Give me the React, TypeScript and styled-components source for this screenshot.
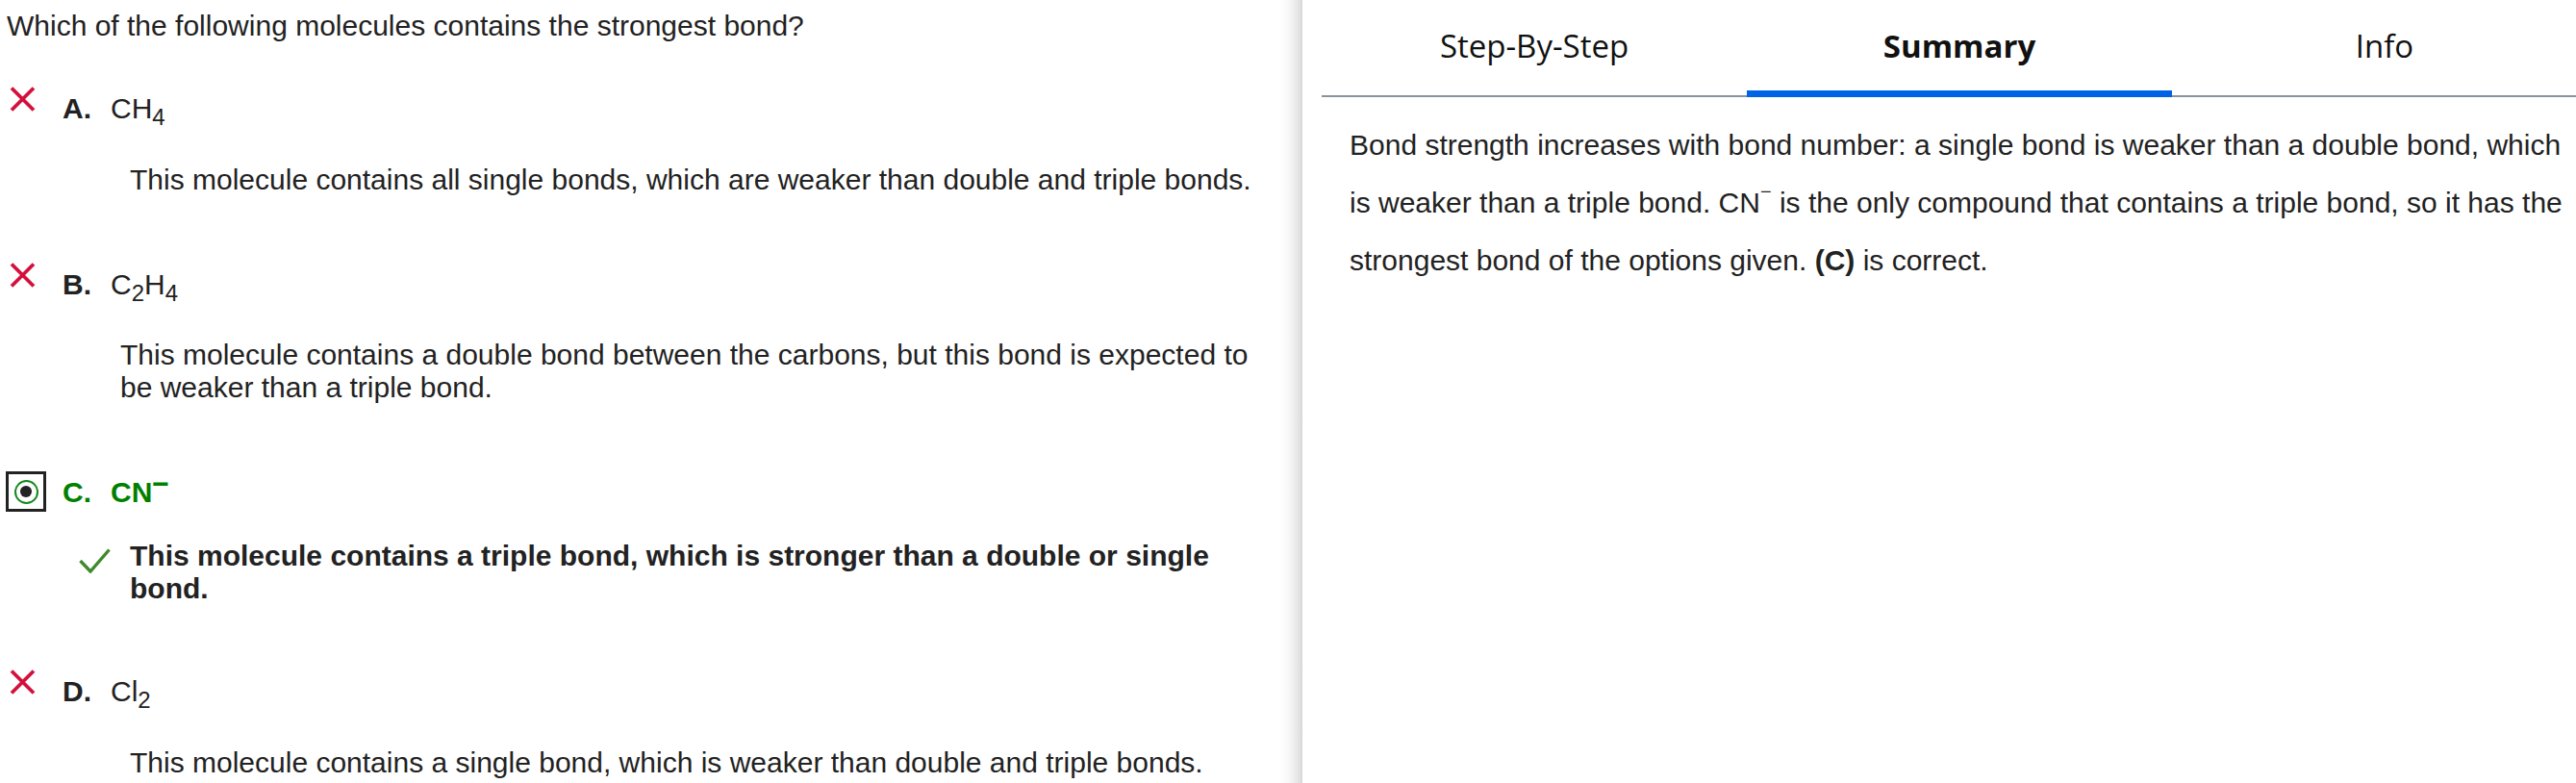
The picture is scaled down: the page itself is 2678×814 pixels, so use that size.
import React from "react";
import styled, { createGlobalStyle } from "styled-components";

const GlobalStyle = createGlobalStyle`
  html, body { margin: 0; padding: 0; background: #fff; }
  body { font-family: "Liberation Sans", Arial, sans-serif; color: #222; }
  * { box-sizing: border-box; }
`;

const Page = styled.div`
  display: flex;
  width: 2678px;
  height: 814px;
  overflow: hidden;
  background: #fff;
`;

const QuestionPane = styled.section`
  flex: 0 0 1330px;
  padding: 10px 20px 0 7px;
  font-family: "Liberation Sans", Arial, sans-serif;
  font-size: 30px;
  line-height: 34px;
  color: #222;
`;

const Question = styled.p`
  margin: 0;
`;

const Option = styled.div<{ $gap: number }>`
  margin-top: ${(p) => p.$gap}px;
`;

const OptionHead = styled.div`
  display: flex;
  align-items: flex-start;
`;

const MarkerSlot = styled.div`
  flex: 0 0 58px;
  display: flex;
`;

const WrongMark = styled.svg`
  margin-left: 3px;
  width: 27px;
  height: 26px;
`;

const RadioBox = styled.div`
  margin-left: -1px;
  width: 42px;
  height: 42px;
  border: 3px solid #222;
  display: flex;
  align-items: center;
  justify-content: center;
`;

const RadioRing = styled.div`
  width: 25px;
  height: 25px;
  border-radius: 50%;
  border: 2.5px solid #12891a;
  display: flex;
  align-items: center;
  justify-content: center;
`;

const RadioDot = styled.div`
  width: 12px;
  height: 12px;
  border-radius: 50%;
  background: #222;
`;

const Label = styled.div<{ $offset: number; $correct?: boolean }>`
  margin-top: ${(p) => p.$offset}px;
  color: ${(p) => (p.$correct ? "#008000" : "#222")};
  font-weight: ${(p) => (p.$correct ? 700 : 400)};
  white-space: nowrap;
`;

const Letter = styled.span`
  font-weight: 700;
  margin-right: 20px;
`;

const Sub = styled.sub`
  font-size: 24px;
  line-height: 0;
  vertical-align: -7px;
`;

const Charge = styled.sup<{ $size: number; $lift: number }>`
  font-size: ${(p) => p.$size}px;
  line-height: 0;
  vertical-align: ${(p) => p.$lift}px;
`;

const Explanation = styled.div<{ $gap: number; $indent: number; $strong?: boolean }>`
  margin-top: ${(p) => p.$gap}px;
  padding-left: ${(p) => p.$indent}px;
  display: flex;
  align-items: flex-start;
  font-weight: ${(p) => (p.$strong ? 700 : 400)};
`;

const CheckMark = styled.svg`
  flex: 0 0 33px;
  width: 33px;
  height: 26px;
  margin-top: 9px;
  margin-right: 20px;
`;

const Gutter = styled.div`
  flex: 0 0 24px;
  background: linear-gradient(to right, #ffffff 0%, #f6f6f6 45%, #e6e6e6 80%, #d8d8d8 100%);
`;

const SolutionPane = styled.section`
  flex: 1 1 auto;
  min-width: 0;
  overflow: hidden;
  padding-left: 20px;
`;

const TabBar = styled.div`
  display: flex;
  width: 1326px;
  border-bottom: 2px solid #88939b;
`;

const Tab = styled.div<{ $active?: boolean }>`
  position: relative;
  flex: 0 0 442px;
  height: 99px;
  padding-top: 26px;
  text-align: center;
  font-family: "Open Sans", "Noto Sans", sans-serif;
  font-size: 33px;
  line-height: 44px;
  color: #111;
  font-weight: ${(p) => (p.$active ? 700 : 400)};
  &::after {
    content: "";
    display: ${(p) => (p.$active ? "block" : "none")};
    position: absolute;
    left: 0;
    right: 0;
    bottom: -2px;
    height: 7px;
    background: #0063e5;
  }
`;

const Summary = styled.p`
  margin: 0;
  padding: 20px 8px 0 29px;
  font-family: "Liberation Sans", Arial, sans-serif;
  font-size: 30px;
  line-height: 60px;
  color: #222;
`;

const Wrong = () => (
  <WrongMark viewBox="0 0 27 26">
    <path d="M2 1.5 L25 24.5 M25 1.5 L2 24.5" stroke="#d3103c" strokeWidth="3.8" fill="none" />
  </WrongMark>
);

export default function App() {
  return (
    <>
      <GlobalStyle />
      <Page>
        <QuestionPane>
          <Question>Which of the following molecules contains the strongest bond?</Question>

          <Option $gap={46}>
            <OptionHead>
              <MarkerSlot>
                <Wrong />
              </MarkerSlot>
              <Label $offset={6}>
                <Letter>A.</Letter>CH<Sub>4</Sub>
              </Label>
            </OptionHead>
            <Explanation $gap={40} $indent={128}>
              This molecule contains all single bonds, which are weaker than double and triple bonds.
            </Explanation>
          </Option>

          <Option $gap={69}>
            <OptionHead>
              <MarkerSlot>
                <Wrong />
              </MarkerSlot>
              <Label $offset={6}>
                <Letter>B.</Letter>C<Sub>2</Sub>H<Sub>4</Sub>
              </Label>
            </OptionHead>
            <Explanation $gap={39} $indent={118}>
              This molecule contains a double bond between the carbons, but this bond is expected to be weaker than a triple bond.
            </Explanation>
          </Option>

          <Option $gap={70}>
            <OptionHead>
              <MarkerSlot>
                <RadioBox>
                  <RadioRing>
                    <RadioDot />
                  </RadioRing>
                </RadioBox>
              </MarkerSlot>
              <Label $offset={5} $correct>
                <Letter>C.</Letter>CN<Charge $size={30} $lift={9}>−</Charge>
              </Label>
            </OptionHead>
            <Explanation $gap={29} $indent={75} $strong>
              <CheckMark viewBox="0 0 33 26">
                <path d="M1.5 13 L12 24 L31.5 1.5" stroke="#3f8a2b" strokeWidth="3.4" fill="none" />
              </CheckMark>
              <span>This molecule contains a triple bond, which is stronger than a double or single bond.</span>
            </Explanation>
          </Option>

          <Option $gap={67}>
            <OptionHead>
              <MarkerSlot>
                <Wrong />
              </MarkerSlot>
              <Label $offset={6}>
                <Letter>D.</Letter>Cl<Sub>2</Sub>
              </Label>
            </OptionHead>
            <Explanation $gap={40} $indent={128}>
              This molecule contains a single bond, which is weaker than double and triple bonds.
            </Explanation>
          </Option>
        </QuestionPane>

        <Gutter />

        <SolutionPane>
          <TabBar>
            <Tab>Step-By-Step</Tab>
            <Tab $active>Summary</Tab>
            <Tab>Info</Tab>
          </TabBar>
          <Summary>
            Bond strength increases with bond number: a single bond is weaker than a double bond, which is weaker than a triple bond. CN
            <Charge $size={20} $lift={15}>−</Charge> is the only compound that contains a triple bond, so it has the strongest bond of the options given. <b>(C)</b> is correct.
          </Summary>
        </SolutionPane>
      </Page>
    </>
  );
}
